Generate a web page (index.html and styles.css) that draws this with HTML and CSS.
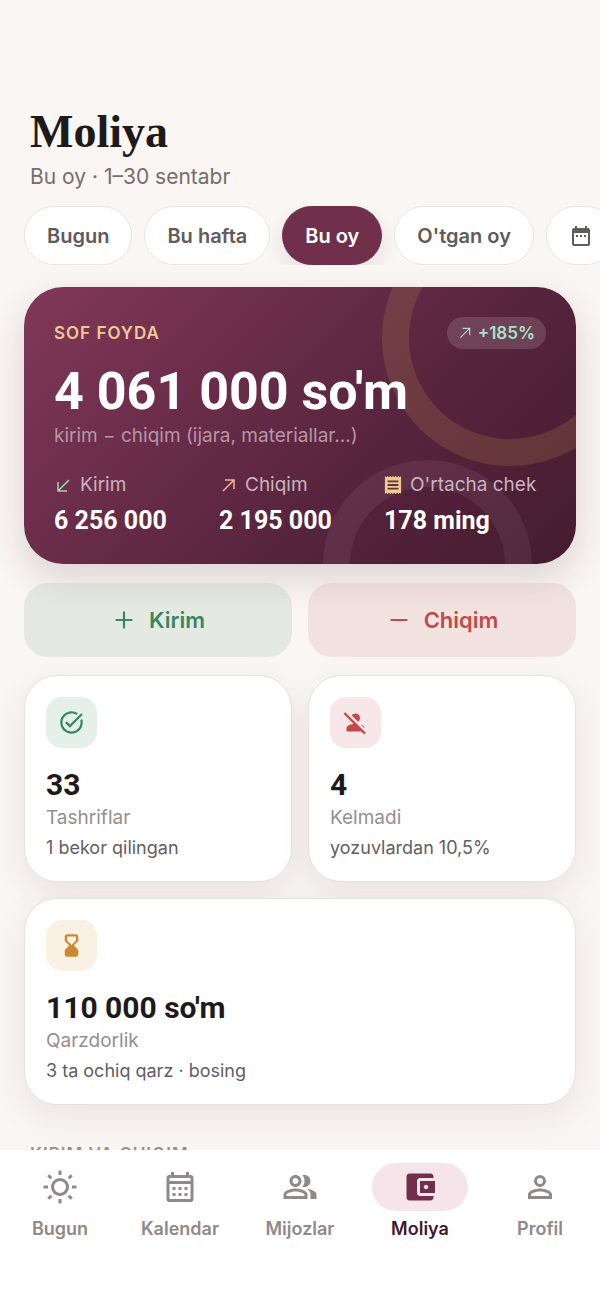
FILE: index.html
```html
<!DOCTYPE html>
<html lang="uz">
<head>
    <meta charset="UTF-8">
    <meta name="viewport" content="width=device-width, initial-scale=1.0">
    <title>Moliya</title>
    <link rel="stylesheet" href="styles.css">
</head>
<body>
    <main class="content">
        <header class="page-header">
            <h1>Moliya</h1>
            <p>Bu oy · 1–30 sentabr</p>
        </header>

        <div class="chips">
            <button type="button" class="chip">Bugun</button>
            <button type="button" class="chip">Bu hafta</button>
            <button type="button" class="chip active">Bu oy</button>
            <button type="button" class="chip">O'tgan oy</button>
            <button type="button" class="chip" aria-label="Sana tanlash">
                <svg class="icon-chip" viewBox="0 0 24 24"><path fill-rule="evenodd" d="M6 2h2v2h8V2h2v2h1a2 2 0 0 1 2 2v14a2 2 0 0 1-2 2H5a2 2 0 0 1-2-2V6a2 2 0 0 1 2-2h1zM5 9v11h14V9zM7 11h2v2H7zm4 0h2v2h-2zm4 0h2v2h-2z"/></svg>
            </button>
        </div>

        <section class="hero">
            <div class="hero-top">
                <h2>SOF FOYDA</h2>
                <span class="trend">
                    <svg class="icon-small" viewBox="0 0 18 18"><path class="line" d="M3 15L15 3M6 3h9v9"/></svg>
                    +185%
                </span>
            </div>
            <div class="amount">4 061 000 so'm</div>
            <p class="formula">kirim − chiqim (ijara, materiallar…)</p>
            <div class="stats">
                <div class="stat">
                    <div class="stat-label">
                        <svg class="icon-stat mint" viewBox="0 0 18 18"><path class="line" d="M15 4L4 15M4 6v9h9"/></svg>
                        Kirim
                    </div>
                    <div class="stat-value">6 256 000</div>
                </div>
                <div class="stat">
                    <div class="stat-label">
                        <svg class="icon-stat peach" viewBox="0 0 18 18"><path class="line" d="M4 15L15 4M6 4h9v9"/></svg>
                        Chiqim
                    </div>
                    <div class="stat-value">2 195 000</div>
                </div>
                <div class="stat">
                    <div class="stat-label">
                        <svg class="icon-stat gold" viewBox="3 2 18 20"><path d="M18 17H6v-2h12v2zm0-4H6v-2h12v2zm0-4H6V7h12v2zM3 22l1.500-1.500L6 22l1.500-1.500L9 22l1.500-1.500L12 22l1.500-1.500L15 22l1.500-1.500L18 22l1.500-1.500L21 22V2l-1.500 1.500L18 2l-1.500 1.500L15 2l-1.500 1.500L12 2l-1.500 1.500L9 2 7.500 3.500 6 2 4.500 3.500 3 2z"/></svg>
                        O'rtacha chek
                    </div>
                    <div class="stat-value">178 ming</div>
                </div>
            </div>
        </section>

        <div class="actions">
            <button type="button" class="action income">
                <svg class="icon-action" viewBox="0 0 24 24"><path class="line" d="M12 5v14M5 12h14"/></svg>
                Kirim
            </button>
            <button type="button" class="action expense">
                <svg class="icon-action" viewBox="0 0 24 24"><path class="line" d="M5 12h14"/></svg>
                Chiqim
            </button>
        </div>

        <div class="cards">
            <section class="card">
                <div class="tile green">
                    <svg viewBox="0 0 24 24"><path d="M22 5.180L10.590 16.600l-4.240-4.240 1.410-1.410 2.830 2.830 10-10zM19.790 10.220c.13.57.21 1.170.21 1.780 0 4.420-3.580 8-8 8s-8-3.580-8-8 3.580-8 8-8c1.580 0 3.040.46 4.280 1.250l1.440-1.440A9.900 9.900 0 0 0 12 2C6.480 2 2 6.480 2 12s4.480 10 10 10 10-4.480 10-10c0-1.190-.22-2.330-.6-3.390z"/></svg>
                </div>
                <div class="number">33</div>
                <div class="label">Tashriflar</div>
                <div class="note">1 bekor qilingan</div>
            </section>
            <section class="card">
                <div class="tile red">
                    <svg viewBox="0 0 24 24"><path d="M8.650 5.820C9.360 4.720 10.600 4 12 4c2.210 0 4 1.790 4 4 0 1.400-.72 2.640-1.820 3.350zM20 17.170c-.02-1.100-.63-2.110-1.610-2.620-.54-.28-1.130-.54-1.770-.76zM21.190 21.190L2.810 2.810 1.390 4.220l8.890 8.890c-1.810.23-3.390.79-4.670 1.450C4.610 15.070 4 16.100 4 17.220V20h13.170l2.610 2.610z"/></svg>
                </div>
                <div class="number">4</div>
                <div class="label">Kelmadi</div>
                <div class="note">yozuvlardan 10,5%</div>
            </section>
            <section class="card wide">
                <div class="tile amber">
                    <svg viewBox="0 0 24 24"><path fill-rule="evenodd" d="M8 2h8a2 2 0 0 1 2 2v4l-4 4 4 4v4a2 2 0 0 1-2 2H8a2 2 0 0 1-2-2v-4l4-4-4-4V4a2 2 0 0 1 2-2zm0 2v3.500l4 4 4-4V4z"/></svg>
                </div>
                <div class="number">110 000 so'm</div>
                <div class="label">Qarzdorlik</div>
                <div class="note">3 ta ochiq qarz · bosing</div>
            </section>
        </div>

        <h2 class="section-title">KIRIM VA CHIQIM</h2>
    </main>

    <nav class="tabbar">
        <a href="#bugun" class="tab">
            <span class="tab-icon"><svg viewBox="0 0 24 24"><circle class="line" cx="12" cy="12" r="5"/><path class="line" d="M12 1v3M12 20v3M1 12h3M20 12h3M4.200 4.200l2 2M17.800 17.800l2 2M4.200 19.800l2-2M17.800 6.200l2-2"/></svg></span>
            Bugun
        </a>
        <a href="#kalendar" class="tab">
            <span class="tab-icon"><svg viewBox="0 0 24 24"><path fill-rule="evenodd" d="M6 2h2v2h8V2h2v2h1a2 2 0 0 1 2 2v14a2 2 0 0 1-2 2H5a2 2 0 0 1-2-2V6a2 2 0 0 1 2-2h1zM5 6v2h14V6zm0 4v10h14V10zM7 12h2v2H7zm4 0h2v2h-2zm4 0h2v2h-2zM7 16h2v2H7zm4 0h2v2h-2zm4 0h2v2h-2z"/></svg></span>
            Kalendar
        </a>
        <a href="#mijozlar" class="tab">
            <span class="tab-icon"><svg viewBox="0 0 24 24"><path d="M16.670 13.130C18.040 14.060 19 15.320 19 17v3h4v-3c0-2.180-3.570-3.470-6.330-3.870zM15 12c2.210 0 4-1.790 4-4s-1.790-4-4-4c-.47 0-.91.1-1.330.24C14.500 5.270 15 6.580 15 8s-.5 2.730-1.330 3.760c.42.14.86.24 1.330.24zM9 12c2.210 0 4-1.790 4-4s-1.790-4-4-4-4 1.790-4 4 1.790 4 4 4zm0-6c1.100 0 2 .9 2 2s-.9 2-2 2-2-.9-2-2 .9-2 2-2zm0 7c-2.670 0-8 1.340-8 4v3h16v-3c0-2.660-5.330-4-8-4zm6 5H3v-.99C3.200 16.290 6.300 15 9 15s5.800 1.290 6 2z"/></svg></span>
            Mijozlar
        </a>
        <a href="#moliya" class="tab current" aria-current="page">
            <span class="tab-icon"><svg viewBox="0 0 24 24"><path fill-rule="evenodd" d="M21 18v1c0 1.100-.9 2-2 2H5c-1.110 0-2-.9-2-2V5c0-1.100.89-2 2-2h14c1.100 0 2 .9 2 2v1h-9c-1.110 0-2 .9-2 2v8c0 1.100.89 2 2 2zm-9-2h10V8H12zm4-2.500c-.83 0-1.500-.67-1.500-1.500s.67-1.500 1.500-1.500 1.500.67 1.500 1.500-.67 1.500-1.500 1.500z"/></svg></span>
            Moliya
        </a>
        <a href="#profil" class="tab">
            <span class="tab-icon"><svg viewBox="0 0 24 24"><path fill-rule="evenodd" d="M12 4a4 4 0 1 1 0 8 4 4 0 0 1 0-8zm0 2a2 2 0 1 0 0 4 2 2 0 0 0 0-4zm0 7c2.670 0 8 1.340 8 4v3H4v-3c0-2.660 5.330-4 8-4zm0 2c-2.700 0-5.800 1.290-6 2v1h12v-1c-.2-.71-3.300-2-6-2z"/></svg></span>
            Profil
        </a>
    </nav>
</body>
</html>
```

FILE: styles.css
```css
*, *::before, *::after {
    box-sizing: border-box;
}

body {
    margin: 0;
    height: 100vh;
    display: flex;
    flex-direction: column;
    background-color: #faf6f3;
    color: #1c1a1a;
    font-family: Inter, "Liberation Sans", sans-serif;
}

h1, h2, p {
    margin: 0;
}

button {
    border: none;
    font-family: inherit;
    cursor: pointer;
}

svg {
    fill: currentColor;
    flex: none;
}

.line {
    fill: none;
    stroke: currentColor;
    stroke-width: 2;
}

.content {
    flex: 1;
    min-height: 0;
    overflow-y: auto;
    scrollbar-width: none;
    padding: 106px 24px 0;
}

.page-header {
    padding: 0 6px;
}

.page-header h1 {
    font-family: "Liberation Serif", serif;
    font-size: 46px;
    line-height: 52px;
}

.page-header p {
    margin-top: 5px;
    font-size: 21px;
    line-height: 28px;
    color: #756d6e;
}

/* period filter */
.chips {
    display: flex;
    gap: 12px;
    margin: 15px -24px 22px;
    padding: 0 24px;
    overflow-x: auto;
    scrollbar-width: none;
}

.chip {
    flex: none;
    display: flex;
    align-items: center;
    height: 59px;
    padding: 0 22px;
    border: 1px solid #e9e3e1;
    border-radius: 30px;
    background-color: #fff;
    color: #625a5b;
    font-size: 20px;
    font-weight: 600;
}

.chip.active {
    border-color: #70304b;
    background-color: #70304b;
    color: #fff;
    box-shadow: 0 8px 20px rgba(60, 20, 40, 0.1);
}

.icon-chip {
    width: 24px;
    height: 24px;
}

/* net profit */
.hero {
    position: relative;
    overflow: hidden;
    padding: 30px 30px 28px;
    border-radius: 39px;
    background: linear-gradient(135deg, #823858 0%, #57243d 62%, #451b2f 100%);
    color: #fff;
    box-shadow: 0 14px 36px rgba(60, 30, 40, 0.16);
}

.hero::before, .hero::after {
    content: "";
    position: absolute;
    border-radius: 50%;
}

.hero::before {
    top: -77px;
    right: -62px;
    width: 256px;
    height: 256px;
    border: 27px solid rgba(202, 152, 80, 0.19);
}

.hero::after {
    right: 44px;
    bottom: -105px;
    width: 209px;
    height: 209px;
    border: 27px solid rgba(255, 220, 255, 0.07);
}

.hero > * {
    position: relative;
    z-index: 1;
}

.hero .line {
    stroke-width: 1.5;
}

.hero-top {
    display: flex;
    justify-content: space-between;
    align-items: center;
}

.hero-top h2 {
    font-size: 17px;
    font-weight: 600;
    letter-spacing: 1px;
    color: #eccb96;
}

.trend {
    display: flex;
    align-items: center;
    gap: 6px;
    height: 32px;
    padding: 0 11px;
    border-radius: 16px;
    background-color: rgba(255, 255, 255, 0.14);
    color: #a9e2c8;
    font-size: 17px;
    font-weight: 600;
}

.icon-small {
    width: 14px;
    height: 14px;
}

.amount, .stat-value, .number {
    font-family: Roboto, sans-serif;
    font-weight: 700;
}

.amount {
    margin-top: 13px;
    font-size: 52px;
    line-height: 60px;
}

.formula {
    margin-top: 2px;
    font-size: 19px;
    line-height: 24px;
    color: #b795a6;
}

.stats {
    display: grid;
    grid-template-columns: repeat(3, 1fr);
    gap: 3px;
    margin-top: 24px;
}

.stat-label {
    display: flex;
    align-items: center;
    gap: 8px;
    font-size: 19px;
    line-height: 26px;
    white-space: nowrap;
    color: #cbb2be;
}

.icon-stat {
    width: 18px;
    height: 18px;
}

.mint {
    color: #9bd5bb;
}

.peach {
    color: #f0b29f;
}

.gold {
    color: #eccb8e;
}

.stat-value {
    margin-top: 8px;
    font-size: 25px;
    line-height: 30px;
}

/* add income or expense */
.actions {
    position: relative;
    display: grid;
    grid-template-columns: 1fr 1fr;
    gap: 16px;
    margin-top: 19px;
}

.action {
    display: flex;
    justify-content: center;
    align-items: center;
    gap: 12px;
    height: 74px;
    border-radius: 24px;
    font-size: 22px;
    font-weight: 600;
}

.income {
    background-color: rgba(56, 135, 96, 0.11);
    color: #388760;
}

.expense {
    background-color: rgba(180, 75, 75, 0.11);
    color: #c14b4b;
}

.icon-action {
    width: 26px;
    height: 26px;
}

.icon-action .line {
    stroke-linecap: round;
}

.cards {
    position: relative;
    display: grid;
    grid-template-columns: 1fr 1fr;
    gap: 16px;
    margin-top: 18px;
}

.card {
    padding: 21px;
    border: 1px solid #e7e1df;
    border-radius: 33px;
    background-color: #fff;
    box-shadow: 0 12px 36px rgba(50, 30, 20, 0.08);
}

.wide {
    grid-column: span 2;
}

.tile {
    display: flex;
    justify-content: center;
    align-items: center;
    width: 51px;
    height: 51px;
    border-radius: 16px;
}

.tile svg {
    width: 27px;
    height: 27px;
}

.green {
    background-color: #e4f0e9;
    color: #388760;
}

.red {
    background-color: #f7e7e8;
    color: #c14b4b;
}

.amber {
    background-color: #f9f1e4;
    color: #cc8934;
}

.number {
    margin-top: 20px;
    font-size: 30px;
    line-height: 34px;
}

.label {
    margin-top: 3px;
    font-size: 19px;
    line-height: 26px;
    color: #978e90;
}

.note {
    margin-top: 5px;
    font-size: 18px;
    line-height: 24px;
    color: #655d5e;
}

.section-title {
    margin-top: 37px;
    padding: 0 6px;
    font-size: 17px;
    font-weight: 600;
    line-height: 24px;
    letter-spacing: 1px;
    color: #978e90;
}

/* bottom navigation */
.tabbar {
    position: relative;
    display: grid;
    grid-template-columns: repeat(5, 1fr);
    padding: 13px 0 64px;
    background-color: #fff;
}

.tab {
    display: flex;
    flex-direction: column;
    align-items: center;
    gap: 6px;
    color: #918889;
    font-size: 18px;
    font-weight: 600;
    line-height: 24px;
    text-decoration: none;
}

.tab-icon {
    display: flex;
    justify-content: center;
    align-items: center;
    width: 96px;
    height: 48px;
    border-radius: 24px;
}

.tab-icon svg {
    width: 36px;
    height: 36px;
}

.current {
    color: #42182c;
}

.current .tab-icon {
    background-color: #f5e5eb;
    color: #70304b;
}
```
